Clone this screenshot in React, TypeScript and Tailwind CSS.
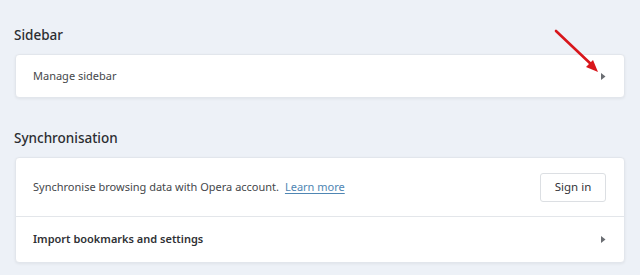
import React from 'react';

const Caret = () => (
  <svg width="6" height="9" viewBox="0 0 6 9" className="shrink-0">
    <path d="M1 1 L5.5 4.5 L1 8 Z" fill="#6b6e73" />
  </svg>
);

const App = () => {
  return (
    <div
      className="relative w-[640px] h-[275px] overflow-hidden bg-[#edf1f7] px-[15px] pt-[24px]"
      style={{ fontFamily: '"Noto Sans", "Open Sans", sans-serif' }}
    >
      <h2 className="text-[13.5px] leading-[22px] font-medium text-[#2b2d31] mb-[8px] -ml-[1px]">
        Sidebar
      </h2>
      <div className="bg-white rounded-[4px] border border-[#e2e6ec] shadow-[0_1px_3px_rgba(0,0,0,0.06)]">
        <div className="h-[42px] flex items-center justify-between pl-[17px] pr-[18px]">
          <span className="text-[11px] text-[#45474b]">Manage sidebar</span>
          <Caret />
        </div>
      </div>

      <h2 className="mt-[29px] text-[13.5px] leading-[22px] font-medium text-[#2b2d31] mb-[8px] -ml-[1px]">
        Synchronisation
      </h2>
      <div className="bg-white rounded-[4px] border border-[#e2e6ec] shadow-[0_1px_3px_rgba(0,0,0,0.06)]">
        <div className="h-[59px] flex items-center justify-between pl-[17px] pr-[18px] border-b border-[#e3e6ea]">
          <span className="text-[11px] text-[#45474b]">
            Synchronise browsing data with Opera account.{' '}
            <a className="ml-[3px] text-[#4f86b3] underline underline-offset-2">Learn more</a>
          </span>
          <button className="w-[66px] h-[29px] rounded-[3px] border border-[#dcdfe3] bg-white text-[11.5px] text-[#333438]">
            Sign in
          </button>
        </div>
        <div className="h-[45px] flex items-center justify-between pl-[17px] pr-[18px]">
          <span className="text-[11px] font-semibold text-[#2f3135]">Import bookmarks and settings</span>
          <Caret />
        </div>
      </div>

      <svg
        className="absolute left-[550px] top-[26px]"
        width="56"
        height="54"
        viewBox="0 0 56 54"
      >
        <line x1="6" y1="5" x2="43" y2="40" stroke="#d8161b" strokeWidth="2.6" strokeLinecap="round" />
        <path d="M48 46 L36 41 L43 34 Z" fill="#d8161b" />
      </svg>
    </div>
  );
};

export default App;
